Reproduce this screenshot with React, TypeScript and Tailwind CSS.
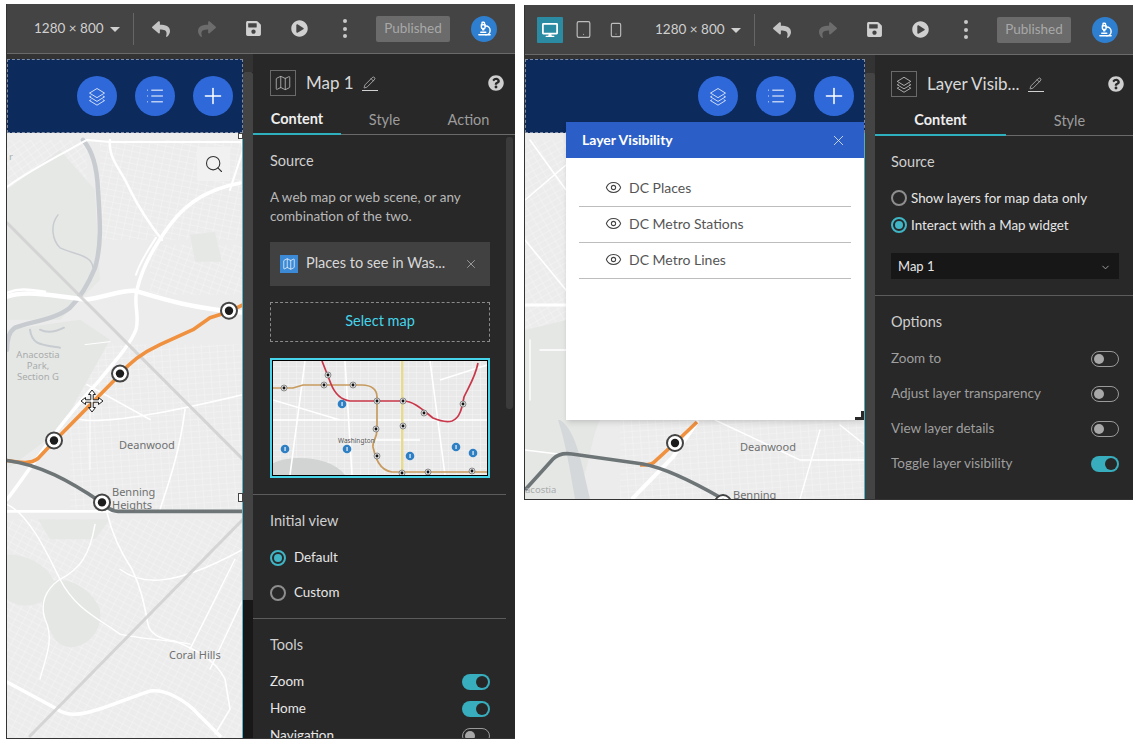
import { ReactNode } from 'react';
import { FaDesktop, FaPlayCircle, FaQuestionCircle, FaReply, FaSave, FaShare } from 'react-icons/fa';
import { ChevronDown, Eye, List, Map as MapIcon, Microscope, Pencil, Plus, Search, Smartphone, Tablet, X } from 'lucide-react';

const MAP_FONT = { fontFamily: '"Noto Sans", sans-serif' };

function LayersGlyph({ size = 22, color = '#fff' }: { size?: number; color?: string }) {
  return (
    <svg width={size} height={size} viewBox="0 0 24 24" fill="none" stroke={color} strokeWidth="1.1">
      <path d="M12 3 L21 8.5 L12 14 L3 8.5 Z" />
      <path d="M5 12 L3 13 L12 18.5 L21 13 L19 12" />
      <path d="M5 16.5 L3 17.5 L12 23 L21 17.5 L19 16.5" />
    </svg>
  );
}

function ToolbarBtn({ children, className = '' }: { children: ReactNode; className?: string }) {
  return <div className={`w-[46px] flex items-center justify-center ${className}`}>{children}</div>;
}

function Toolbar({ devices }: { devices?: boolean }) {
  return (
    <div className="h-[50px] shrink-0 flex items-center bg-[#444444] border-b border-[#6a6a6a] text-[#d0d0d0]">
      {devices ? (
        <div className="flex items-center pl-[12px] w-[130px] shrink-0">
          <div className="w-[26px] h-[26px] rounded-[1px] bg-[#2a8ba3] flex items-center justify-center">
            <FaDesktop size={16} color="#fff" />
          </div>
          <Tablet size={19} strokeWidth={1.5} className="ml-[11px] text-[#bdbdbd]" />
          <Smartphone size={16} strokeWidth={1.7} className="ml-[15px] text-[#bdbdbd]" />
        </div>
      ) : (
        <div className="w-[27px] shrink-0" />
      )}
      <span className="text-[13.5px] w-[70px] shrink-0 whitespace-nowrap">1280 × 800</span>
      <div className="w-0 h-0 ml-[6px] mt-[1px] border-x-[5px] border-x-transparent border-t-[5px] border-t-[#d0d0d0]" />
      <div className="w-px h-[32px] bg-[#666] ml-[13px] mr-[4px]" />
      <ToolbarBtn><FaReply size={18} color="#c4c4c4" /></ToolbarBtn>
      <ToolbarBtn><FaShare size={18} color="#6c6c6c" /></ToolbarBtn>
      <ToolbarBtn><FaSave size={17} color="#d0d0d0" /></ToolbarBtn>
      <ToolbarBtn><FaPlayCircle size={17} color="#d0d0d0" /></ToolbarBtn>
      <ToolbarBtn>
        <div className="flex flex-col gap-[3.5px]">
          <span className="w-[4px] h-[4px] rounded-full bg-[#c8c8c8]" />
          <span className="w-[4px] h-[4px] rounded-full bg-[#c8c8c8]" />
          <span className="w-[4px] h-[4px] rounded-full bg-[#c8c8c8]" />
        </div>
      </ToolbarBtn>
      <div className="ml-[8px] w-[74px] h-[26px] bg-[#6b6b6b] rounded-[2px] text-[13.5px] text-[#a8a8a8] flex items-center justify-center">
        Published
      </div>
      <div className="ml-[21px] w-[26px] h-[26px] rounded-full bg-[#2f7fd0] flex items-center justify-center">
        <Microscope size={15} strokeWidth={2.3} color="#fff" />
      </div>
    </div>
  );
}

function Banner({ padClass }: { padClass: string }) {
  return (
    <div className={`h-[74px] shrink-0 bg-[#0c2a5c] border border-dashed border-[#7f8aa3] flex items-center justify-end gap-[18px] ${padClass}`}>
      <div className="w-10 h-10 rounded-full bg-[#2f69d9] flex items-center justify-center"><LayersGlyph size={20} color="#dfe7fa" /></div>
      <div className="w-10 h-10 rounded-full bg-[#2f69d9] flex items-center justify-center"><List size={20} strokeWidth={1.2} color="#fff" /></div>
      <div className="w-10 h-10 rounded-full bg-[#2f69d9] flex items-center justify-center"><Plus size={26} strokeWidth={1.4} color="#fff" /></div>
    </div>
  );
}

function Station({ x, y }: { x: number; y: number }) {
  return (
    <g>
      <circle cx={x} cy={y} r={8} fill="#fff" stroke="#444" strokeWidth={2} />
      <circle cx={x} cy={y} r={4.2} fill="#1c1c1c" />
    </g>
  );
}

function Streets({ id, x, y, w, h, angle = 0 }: { id: string; x: number; y: number; w: number; h: number; angle?: number }) {
  return (
    <>
      <defs>
        <pattern id={id} width="8" height="6" patternUnits="userSpaceOnUse" patternTransform={`rotate(${angle})`}>
          <path d="M0 0H8M0 0V6" stroke="#f8f8f8" strokeWidth="0.8" fill="none" />
        </pattern>
      </defs>
      <rect x={x} y={y} width={w} height={h} fill={`url(#${id})`} />
    </>
  );
}

function LeftMap() {
  return (
    <svg className="w-full h-full block" viewBox="7 133 235 606" preserveAspectRatio="none" style={MAP_FONT}>
      <rect x="6" y="133" width="237" height="606" fill="#ececec" />
      <Streets id="l1" x={70} y={345} w={173} h={165} angle={-4} />
      <Streets id="l2" x={7} y={520} w={236} h={220} angle={28} />
      <Streets id="l3" x={7} y={140} w={80} h={50} angle={-35} />
      <Streets id="l4" x={150} y={245} w={93} h={50} angle={20} />
      <Streets id="l5" x={100} y={140} w={143} h={100} angle={12} />
      <Streets id="l6" x={7} y={385} w={60} h={60} angle={-30} />
      <path d="M7 190 L60 150 L95 190 L100 280 L60 320 L7 320 Z" fill="#e6e8e6" />
      <path d="M7 330 L80 320 L110 340 L60 430 L7 470 Z" fill="#e5e7e5" />
      <path d="M43 590 C55 570 90 585 100 610 C105 640 70 660 55 640 C42 620 40 605 43 590 Z" fill="#e5e7e5" />
      <path d="M7 555 C30 555 55 570 55 590 C40 610 20 610 7 600 Z" fill="#e6e8e6" />
      <path d="M38 520 L110 520 L95 540 L50 540 Z" fill="#e6e8e6" />
      <path d="M190 235 L215 232 L222 262 L195 262 Z" fill="#e6e8e6" />
      <g fill="none" stroke="#c8ccd0" strokeLinecap="round">
        <path d="M83 140 C92 150 97 165 98 190 C100 220 102 245 95 268 C88 285 80 298 70 308 C55 320 30 322 15 328 C9 332 7 342 7 350" strokeWidth="4.5" />
        <path d="M58 215 C50 225 52 240 60 248 C75 255 92 255 93 268" strokeWidth="1.5" />
        <path d="M30 330 C32 345 40 345 60 348 M40 330 C50 335 60 330 64 328" strokeWidth="2" />
      </g>
      <g fill="none" stroke="#fff" strokeLinecap="round" strokeLinejoin="round">
        <path d="M7 297 C25 290 55 296 85 300 C105 298 120 290 135 291 C165 300 190 308 243 313" strokeWidth="4.5" />
        <path d="M7 293 C20 288 30 290 45 292" strokeWidth="2.5" />
        <path d="M240 183 C215 188 190 198 170 225 C155 245 142 268 137 290 C133 305 140 315 136 330 C130 345 118 358 100 380 C80 402 60 425 40 455 C25 475 15 490 7 500" strokeWidth="3.5" />
        <path d="M162 237 C152 250 145 262 142 275 M156 238 C147 252 140 262 136 275" strokeWidth="2" />
        <path d="M110 140 C108 160 122 170 130 190 C140 210 150 225 162 240" strokeWidth="2.5" />
        <path d="M7 187 C30 170 60 155 87 140 L110 142 L240 142" strokeWidth="2" />
        <path d="M240 128 L243 150 L230 190" strokeWidth="2" />
        <path d="M7 512 H243" strokeWidth="3" />
        <path d="M7 683 L57 710 C65 716 75 716 85 714 C105 710 125 700 150 692 C165 690 185 700 200 717 L220 737" strokeWidth="3.5" />
        <path d="M107 513 C112 535 122 555 132 570 C142 590 145 610 148 625 C150 635 160 640 175 642 C195 650 215 660 225 680 L230 710 L215 735" strokeWidth="1.6" />
        <path d="M7 505 C30 515 50 560 60 580 C75 610 100 620 120 635 C140 640 165 640 190 645" strokeWidth="1.4" />
        <path d="M95 525 C90 555 80 570 60 580 C45 590 40 605 45 620 C55 640 45 660 40 680" strokeWidth="1.4" />
        <path d="M235 560 L190 650 M243 600 L210 670 M120 570 C140 585 170 590 243 550" strokeWidth="1.4" />
        <path d="M87 385 L150 420 M80 420 C110 425 180 410 243 395 M185 410 C180 450 170 480 160 510" strokeWidth="1.6" />
        <path d="M85 345 L110 342 M90 400 V470" strokeWidth="1" />
      </g>
      <g fill="none" strokeLinecap="round" stroke="#d0d0d0" strokeWidth="3" opacity="0.85">
        <path d="M7 223 L243 460" />
        <path d="M243 520 L30 737" />
      </g>
      <path d="M7 461 C20 463 30 465 38 459 L54 442 L120 375 C130 362 145 352 160 345 L193 330 L210 318 L229 312 L243 305" fill="none" stroke="#f0913f" strokeWidth="3.6" strokeLinejoin="round" />
      <path d="M7 461 C40 465 70 482 100 502 C106 508 112 512 118 512 H243" fill="none" stroke="#6e7577" strokeWidth="3.6" />
      <Station x={229} y={311} />
      <Station x={120} y={374} />
      <Station x={54} y={441} />
      <Station x={102} y={503} />
      <g fill="#a9acab" fontSize="9.5" textAnchor="middle">
        <text x="38" y="358">Anacostia</text>
        <text x="38" y="369">Park,</text>
        <text x="38" y="380">Section G</text>
        <text x="9" y="160" textAnchor="start">r</text>
      </g>
      <g fill="#6f7070" fontSize="11">
        <text x="119" y="450">Deanwood</text>
        <text x="112" y="497">Benning</text>
        <text x="112" y="510">Heights</text>
        <text x="169" y="660">Coral Hills</text>
      </g>
    </svg>
  );
}

function RightMap() {
  return (
    <svg className="w-full h-full block" viewBox="525 133 339 366" preserveAspectRatio="none" style={MAP_FONT}>
      <rect x="525" y="133" width="340" height="366" fill="#ececec" />
      <Streets id="r1" x={525} y={140} w={41} h={190} angle={-30} />
      <Streets id="r2" x={620} y={420} w={245} h={80} angle={-4} />
      <path d="M525 330 L566 320 V420 H600 C590 440 590 470 575 499 H525 Z" fill="#e5e7e5" />
      <path d="M560 420 C575 430 580 455 590 499 H575 C570 470 565 440 558 420 Z" fill="#d5d8da" />
      <g fill="none" stroke="#fff" strokeLinecap="round">
        <path d="M525 200 L566 165 M525 240 L566 290 M530 140 L566 190" strokeWidth="1.6" />
        <path d="M525 305 H566" strokeWidth="3" />
        <path d="M525 450 L566 455 M540 350 L566 350 M530 340 V400" strokeWidth="1.3" />
        <path d="M633 498 L673 457 L697 422" strokeWidth="4" />
        <path d="M715 420 L800 460 L864 460 M820 430 L800 499 M840 425 L865 445" strokeWidth="1.4" />
      </g>
      <path d="M697 422 L675 443 L653 463 C650 465 646 465 640 465" fill="none" stroke="#f0913f" strokeWidth="3.6" />
      <path d="M525 490 L553 459 C558 454 565 453 572 454 L643 464 C660 467 690 480 723 499" fill="none" stroke="#6e7577" strokeWidth="3.6" />
      <Station x={675} y={443} />
      <Station x={723} y={503} />
      <g fill="#6f7070" fontSize="11">
        <text x="740" y="451">Deanwood</text>
        <text x="733" y="499">Benning</text>
      </g>
      <text x="525" y="493" fontSize="9.5" fill="#a9acab">acostia</text>
    </svg>
  );
}

function Thumbnail() {
  const stations = [[284, 388], [324, 385], [328, 375], [353, 385], [377, 401], [403, 401], [424, 413], [463, 404], [376, 429], [403, 426], [377, 456], [402, 473], [428, 472], [472, 471]];
  const info = [[342, 404], [285, 449], [347, 449], [410, 456], [456, 447], [473, 453]];
  return (
    <div className="mt-4 h-[120px] border-2 border-[#45d4ea] bg-black p-px">
      <svg className="w-full h-full block" viewBox="273 361 214 114" preserveAspectRatio="none" style={MAP_FONT}>
        <rect x="273" y="361" width="214" height="114" fill="#e9e9e9" />
        <Streets id="t1" x={273} y={361} w={214} h={114} angle={0} />
        <path d="M273 463 C290 455 330 455 345 475 H273 Z" fill="#d2d4d4" />
        <path d="M305 361 L290 475 M345 361 L352 475 M430 361 L445 475 M273 420 H487 M273 400 L340 420 M440 380 L487 365 M355 440 L420 440" stroke="#fff" strokeWidth="1.6" fill="none" />
        <rect x="401" y="361" width="2.4" height="114" fill="#e8dc8c" />
        <path d="M273 388 H293 L303 385 H362 C372 385 377 390 377 397 V430 C377 438 372 442 373 447 C375 455 378 470 392 472 H487" fill="none" stroke="#c79a5e" strokeWidth="1.7" />
        <path d="M322 361 L331 384 C335 394 342 400 350 401 H403 C415 401 425 412 433 418 C440 421 448 422 452 421 C460 418 462 408 464 397 C468 388 475 378 478 363" fill="none" stroke="#c9374a" strokeWidth="1.7" />
        {stations.map(([x, y]) => (
          <g key={`${x}-${y}`}>
            <circle cx={x} cy={y} r={3} fill="#ddd" stroke="#555" strokeWidth="0.6" />
            <circle cx={x} cy={y} r={1.4} fill="#111" />
          </g>
        ))}
        {info.map(([x, y]) => (
          <g key={`${x}-${y}`}>
            <circle cx={x} cy={y} r={4.3} fill="#2f7fc4" />
            <rect x={x - 0.5} y={y - 2} width="1.1" height="4" fill="#fff" />
          </g>
        ))}
        <text x="338" y="443" fontSize="6.5" fill="#555">Washington</text>
      </svg>
    </div>
  );
}

function Heading({ children }: { children: ReactNode }) {
  return <div className="h-5 leading-5 text-[14.5px] text-[#cfcfcf]">{children}</div>;
}

function Radio({ label, checked, small }: { label: string; checked?: boolean; small?: boolean }) {
  return (
    <div className={`flex items-center text-[13.4px] text-[#e6e6e6] ${small ? 'h-7 gap-[4px]' : 'h-[35px] gap-2'}`}>
      <div className={`w-4 h-4 rounded-full border-2 flex items-center justify-center ${checked ? 'border-[#3fb5c6]' : 'border-[#8e8e8e]'}`}>
        {checked && <div className="w-2 h-2 rounded-full bg-[#3fb5c6]" />}
      </div>
      {label}
    </div>
  );
}

function Toggle({ on }: { on?: boolean }) {
  if (on) {
    return (
      <div className="w-7 h-4 rounded-full bg-[#37adbd] flex items-center justify-end pr-[2px]">
        <div className="w-3 h-3 rounded-full bg-[#272727]" />
      </div>
    );
  }
  return (
    <div className="w-7 h-4 rounded-full border border-[#9a9a9a] flex items-center pl-[2px]">
      <div className="w-[10px] h-[10px] rounded-full bg-[#a8a8a8]" />
    </div>
  );
}

function ToggleRow({ label, on, rowClass, textClass }: { label: string; on?: boolean; rowClass: string; textClass: string }) {
  return (
    <div className={`flex items-center justify-between text-[13.5px] ${rowClass} ${textClass}`}>
      {label}
      <Toggle on={on} />
    </div>
  );
}

function PanelHeader({ icon, title, tabs, topClass, tabWidths, rowClass }: { icon: ReactNode; title: string; tabs: string[]; topClass: string; tabWidths: string[]; rowClass: string }) {
  return (
    <div className={`shrink-0 ${topClass}`}>
      <div className={`h-[26px] flex items-center ${rowClass}`}>
        <div className="w-[26px] h-[26px] border border-[#6a6a6a] flex items-center justify-center">{icon}</div>
        <span className="ml-[10px] text-[17px] text-[#d8d8d8] whitespace-nowrap">{title}</span>
        <span className="ml-2 flex flex-col items-center">
          <Pencil size={13} strokeWidth={1.3} color="#d0d0d0" />
          <span className="w-4 h-px bg-[#d0d0d0] mt-px" />
        </span>
        <FaQuestionCircle size={16} color="#cfcfcf" className="ml-auto" />
      </div>
      <div className="mt-[9px] h-[30px] flex border-b border-[#6a6a6a]">
        {tabs.map((tab, i) => (
          <div
            key={tab}
            className={`${tabWidths[i]} -mb-px flex items-center justify-center text-[14.5px] ${i === 0 ? 'font-bold text-[#eeeeee] border-b-2 border-[#2fb0bf]' : 'text-[#9c9c9c]'}`}
          >
            {tab}
          </div>
        ))}
      </div>
    </div>
  );
}

function MoveCursor() {
  return (
    <svg className="absolute left-[73px] top-[256px]" width="24" height="24" viewBox="0 0 24 24">
      <path d="M12 1 L15.5 5.5 H13.2 V10.8 H18.5 V8.5 L23 12 L18.5 15.5 V13.2 H13.2 V18.5 H15.5 L12 23 L8.5 18.5 H10.8 V13.2 H5.5 V15.5 L1 12 L5.5 8.5 V10.8 H10.8 V5.5 H8.5 Z" fill="#fff" stroke="#222" strokeWidth="1" />
    </svg>
  );
}

function LeftWindow() {
  return (
    <div className="w-[509px] h-[735px] shrink-0 flex flex-col border-l border-b border-[#333] overflow-hidden">
      <Toolbar />
      <div className="flex-1 min-h-0 flex">
        <div className="w-[236px] shrink-0 flex flex-col bg-[#333] pt-[5px]">
          <Banner padClass="pr-[9px]" />
          <div className="relative flex-1 min-h-0 border-r border-[#58b8c8]">
            <LeftMap />
            <div className="absolute right-[-1px] top-0 w-[5px] h-[6px] bg-white border border-[#444]" />
            <div className="absolute right-[-1px] top-[360px] w-[5px] h-[9px] bg-white border border-[#444]" />
            <div className="absolute left-[190px] top-[14px] w-[33px] h-[34px] bg-[#f1f1f1] flex items-center justify-center">
              <Search size={20} strokeWidth={1.3} color="#333" />
            </div>
            <MoveCursor />
          </div>
        </div>
        <div className="w-[10px] shrink-0 bg-[#181818] flex flex-col">
          <div className="h-[18px] bg-[#333]" />
          <div className="h-[528px] bg-[#444] rounded-t-[2px]" />
        </div>
        <div className="flex-1 min-w-0 flex flex-col bg-[#282828]">
          <PanelHeader
            icon={<MapIcon size={18} strokeWidth={1} color="#c8c8c8" />}
            title="Map 1"
            tabs={['Content', 'Style', 'Action']}
            tabWidths={['w-[88px]', 'w-[87px]', 'w-[81px]']}
            topClass="pt-4"
            rowClass="pl-[17px] pr-[11px]"
          />
          <div className="flex-1 min-h-0 flex">
            <div className="w-[253px] shrink-0 overflow-hidden">
              <div className="pl-[17px] pr-4 pt-4 pb-4 border-b border-[#5c5c5c]">
                <Heading>Source</Heading>
                <p className="mt-[17px] text-[13.5px] leading-[19px] text-[#b8b8b8]">A web map or web scene, or any combination of the two.</p>
                <div className="mt-4 h-[44px] bg-[#414141] flex items-center pl-[10px] pr-3">
                  <div className="w-[18px] h-[18px] bg-[#3c8ad6] flex items-center justify-center">
                    <MapIcon size={14} strokeWidth={1.2} color="#fff" />
                  </div>
                  <span className="ml-2 pb-[3px] text-[14.5px] text-[#d8d8d8] whitespace-nowrap">Places to see in Was...</span>
                  <X size={14} strokeWidth={1.3} color="#b5b5b5" className="ml-auto" />
                </div>
                <div className="mt-4 h-[40px] pb-[2px] border border-dashed border-[#8a8a8a] flex items-center justify-center text-[14.5px] text-[#45d4ea]">
                  Select map
                </div>
                <Thumbnail />
              </div>
              <div className="pl-[17px] pr-4 pt-4 pb-2 border-b border-[#5c5c5c]">
                <Heading>Initial view</Heading>
                <div className="mt-[9px]">
                  <Radio label="Default" checked />
                  <Radio label="Custom" />
                </div>
              </div>
              <div className="pl-[17px] pr-4 pt-4">
                <Heading>Tools</Heading>
                <div className="mt-[13px]">
                  <ToggleRow label="Zoom" on rowClass="h-[27px]" textClass="text-[#e6e6e6]" />
                  <ToggleRow label="Home" on rowClass="h-[27px]" textClass="text-[#e6e6e6]" />
                  <ToggleRow label="Navigation" rowClass="h-[27px]" textClass="text-[#e6e6e6]" />
                </div>
              </div>
            </div>
            <div className="flex-1 pt-[2px] pr-[2px]">
              <div className="h-[272px] bg-[#3b3b3b] rounded-[3px]" />
            </div>
          </div>
        </div>
      </div>
    </div>
  );
}

function RightWindow() {
  return (
    <div className="w-[609px] h-[495px] shrink-0 mt-px flex flex-col border-l border-b border-[#333] overflow-hidden">
      <Toolbar devices />
      <div className="flex-1 min-h-0 flex">
        <div className="w-[340px] shrink-0 flex flex-col bg-[#333] pt-[4px]">
          <Banner padClass="pr-[10px]" />
          <div className="relative flex-1 min-h-0 border-r border-[#58b8c8]">
            <RightMap />
          </div>
        </div>
        <div className="w-[10px] shrink-0 bg-[#333] flex flex-col">
          <div className="h-[18px]" />
          <div className="flex-1 bg-[#444] rounded-t-[2px]" />
        </div>
        <div className="flex-1 min-w-0 flex flex-col bg-[#282828]">
          <PanelHeader
            icon={<LayersGlyph size={18} color="#c8c8c8" />}
            title="Layer Visib..."
            tabs={['Content', 'Style']}
            tabWidths={['w-[131px]', 'w-[127px]']}
            topClass="pt-4"
            rowClass="pl-4 pr-[9px]"
          />
          <div className="pl-4 pr-[14px] pt-4 pb-4 border-b border-[#5c5c5c]">
            <Heading>Source</Heading>
            <div className="mt-[12px]">
              <Radio label="Show layers for map data only" small />
              <div className="-mt-[1px]"><Radio label="Interact with a Map widget" checked small /></div>
            </div>
            <div className="mt-[14px] h-[26px] pt-[2px] bg-[#171717] flex items-center justify-between pl-[7px] pr-2 text-[13px] text-[#e6e6e6]">
              Map 1
              <ChevronDown size={11} color="#aaa" />
            </div>
          </div>
          <div className="pl-4 pr-[14px] pt-4">
            <Heading>Options</Heading>
            <div className="mt-[9px]">
              <ToggleRow label="Zoom to" rowClass="h-[35px]" textClass="text-[#9f9f9f]" />
              <ToggleRow label="Adjust layer transparency" rowClass="h-[35px]" textClass="text-[#9f9f9f]" />
              <ToggleRow label="View layer details" rowClass="h-[35px]" textClass="text-[#9f9f9f]" />
              <ToggleRow label="Toggle layer visibility" on rowClass="h-[35px]" textClass="text-[#9f9f9f]" />
            </div>
          </div>
        </div>
      </div>
    </div>
  );
}

function LayerPopup() {
  const layers = ['DC Places', 'DC Metro Stations', 'DC Metro Lines'];
  return (
    <div className="absolute left-[566px] top-[122px] w-[298px] h-[298px] bg-white shadow-md">
      <div className="h-[36px] bg-[#2b5fc7] flex items-center justify-between pl-4 pr-[17px]">
        <span className="text-[14px] font-bold text-white pb-[2px]">Layer Visibility</span>
        <X size={17} strokeWidth={1.2} color="#dbe5f8" />
      </div>
      <div className="pt-[13px] px-[13px]">
        {layers.map((name) => (
          <div key={name} className="h-[36px] pb-[2px] flex items-center pl-[26px] gap-[7px] border-b border-[#bdbdbd] text-[14px] text-[#555]">
            <Eye size={17} strokeWidth={1.5} color="#444" />
            {name}
          </div>
        ))}
      </div>
      <div className="absolute right-0 bottom-0 w-[9px] h-[9px] border-r-[3px] border-b-[3px] border-[#2a2a2a]" />
    </div>
  );
}

export default function App() {
  return (
    <div className="relative w-[1139px] h-[745px] overflow-hidden bg-white pl-[6px] pt-[4px] flex items-start gap-[9px]" style={{ fontFamily: 'Lato, sans-serif' }}>
      <LeftWindow />
      <RightWindow />
      <LayerPopup />
    </div>
  );
}
